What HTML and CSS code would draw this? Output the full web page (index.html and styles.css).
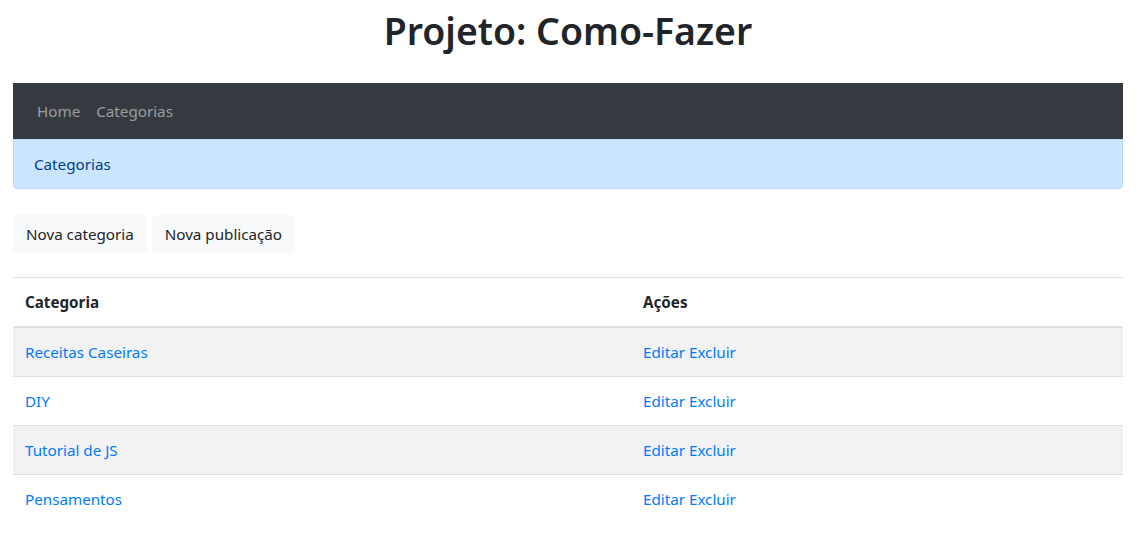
FILE: index.html
```html
<!DOCTYPE html>
<html lang="pt">
<head>
<meta charset="utf-8">
<title>Projeto: Como-Fazer</title>
<link rel="stylesheet" href="styles.css">
</head>
<body>
<div class="container">
  <h1 class="title">Projeto: Como-Fazer</h1>
  <nav class="navbar">
    <a class="nav-link" href="#">Home</a>
    <a class="nav-link" href="#">Categorias</a>
  </nav>
  <div class="alert">Categorias</div>
  <div class="actions">
    <a class="btn" href="#">Nova categoria</a>
    <a class="btn" href="#">Nova publicação</a>
  </div>
  <table class="table">
    <thead>
      <tr><th class="col-cat">Categoria</th><th>Ações</th></tr>
    </thead>
    <tbody>
      <tr><td><a href="#">Receitas Caseiras</a></td><td><a href="#">Editar</a> <a href="#">Excluir</a></td></tr>
      <tr><td><a href="#">DIY</a></td><td><a href="#">Editar</a> <a href="#">Excluir</a></td></tr>
      <tr><td><a href="#">Tutorial de JS</a></td><td><a href="#">Editar</a> <a href="#">Excluir</a></td></tr>
      <tr><td><a href="#">Pensamentos</a></td><td><a href="#">Editar</a> <a href="#">Excluir</a></td></tr>
    </tbody>
  </table>
</div>
</body>
</html>
```
FILE: styles.css
```css
* { box-sizing: border-box; }
body {
  margin: 0;
  font-family: "Noto Sans", "Open Sans", sans-serif;
  font-size: 15.2px;
  line-height: 24px;
  color: #212529;
  background: #fff;
}
a { color: #007bff; text-decoration: none; }
.container {
  padding: 0 18px 0 13px;
}
.title {
  margin: 0;
  padding: 7px 0 0;
  height: 83px;
  font-size: 37.4px;
  line-height: 48px;
  font-weight: 600;
  text-align: center;
}
.navbar {
  display: flex;
  align-items: center;
  height: 56px;
  padding: 0 16px;
  background: #343a40;
}
.nav-link {
  padding: 8px;
  color: rgba(255,255,255,.5);
}
.alert {
  padding: 12px 20px;
  color: #004085;
  background: #cce5ff;
  border: 1px solid #b8daff;
  border-radius: 0 0 4px 4px;
  margin-bottom: 26px;
}
.actions {
  display: flex;
  gap: 5px;
  margin-bottom: 24px;
}
.btn {
  display: inline-block;
  padding: 6px 12px;
  color: #212529;
  background: #f8f9fa;
  border: 1px solid #f8f9fa;
  border-radius: 4px;
}
.table {
  width: 100%;
  border-collapse: collapse;
}
.table th, .table td {
  padding: 12px;
  text-align: left;
  border-top: 1px solid #dee2e6;
  vertical-align: top;
}
.table th { font-weight: 700; border-bottom: 2px solid #dee2e6; }
.col-cat { width: 618px; }
.table tbody tr:nth-child(odd) { background: rgba(0,0,0,.05); }
```
